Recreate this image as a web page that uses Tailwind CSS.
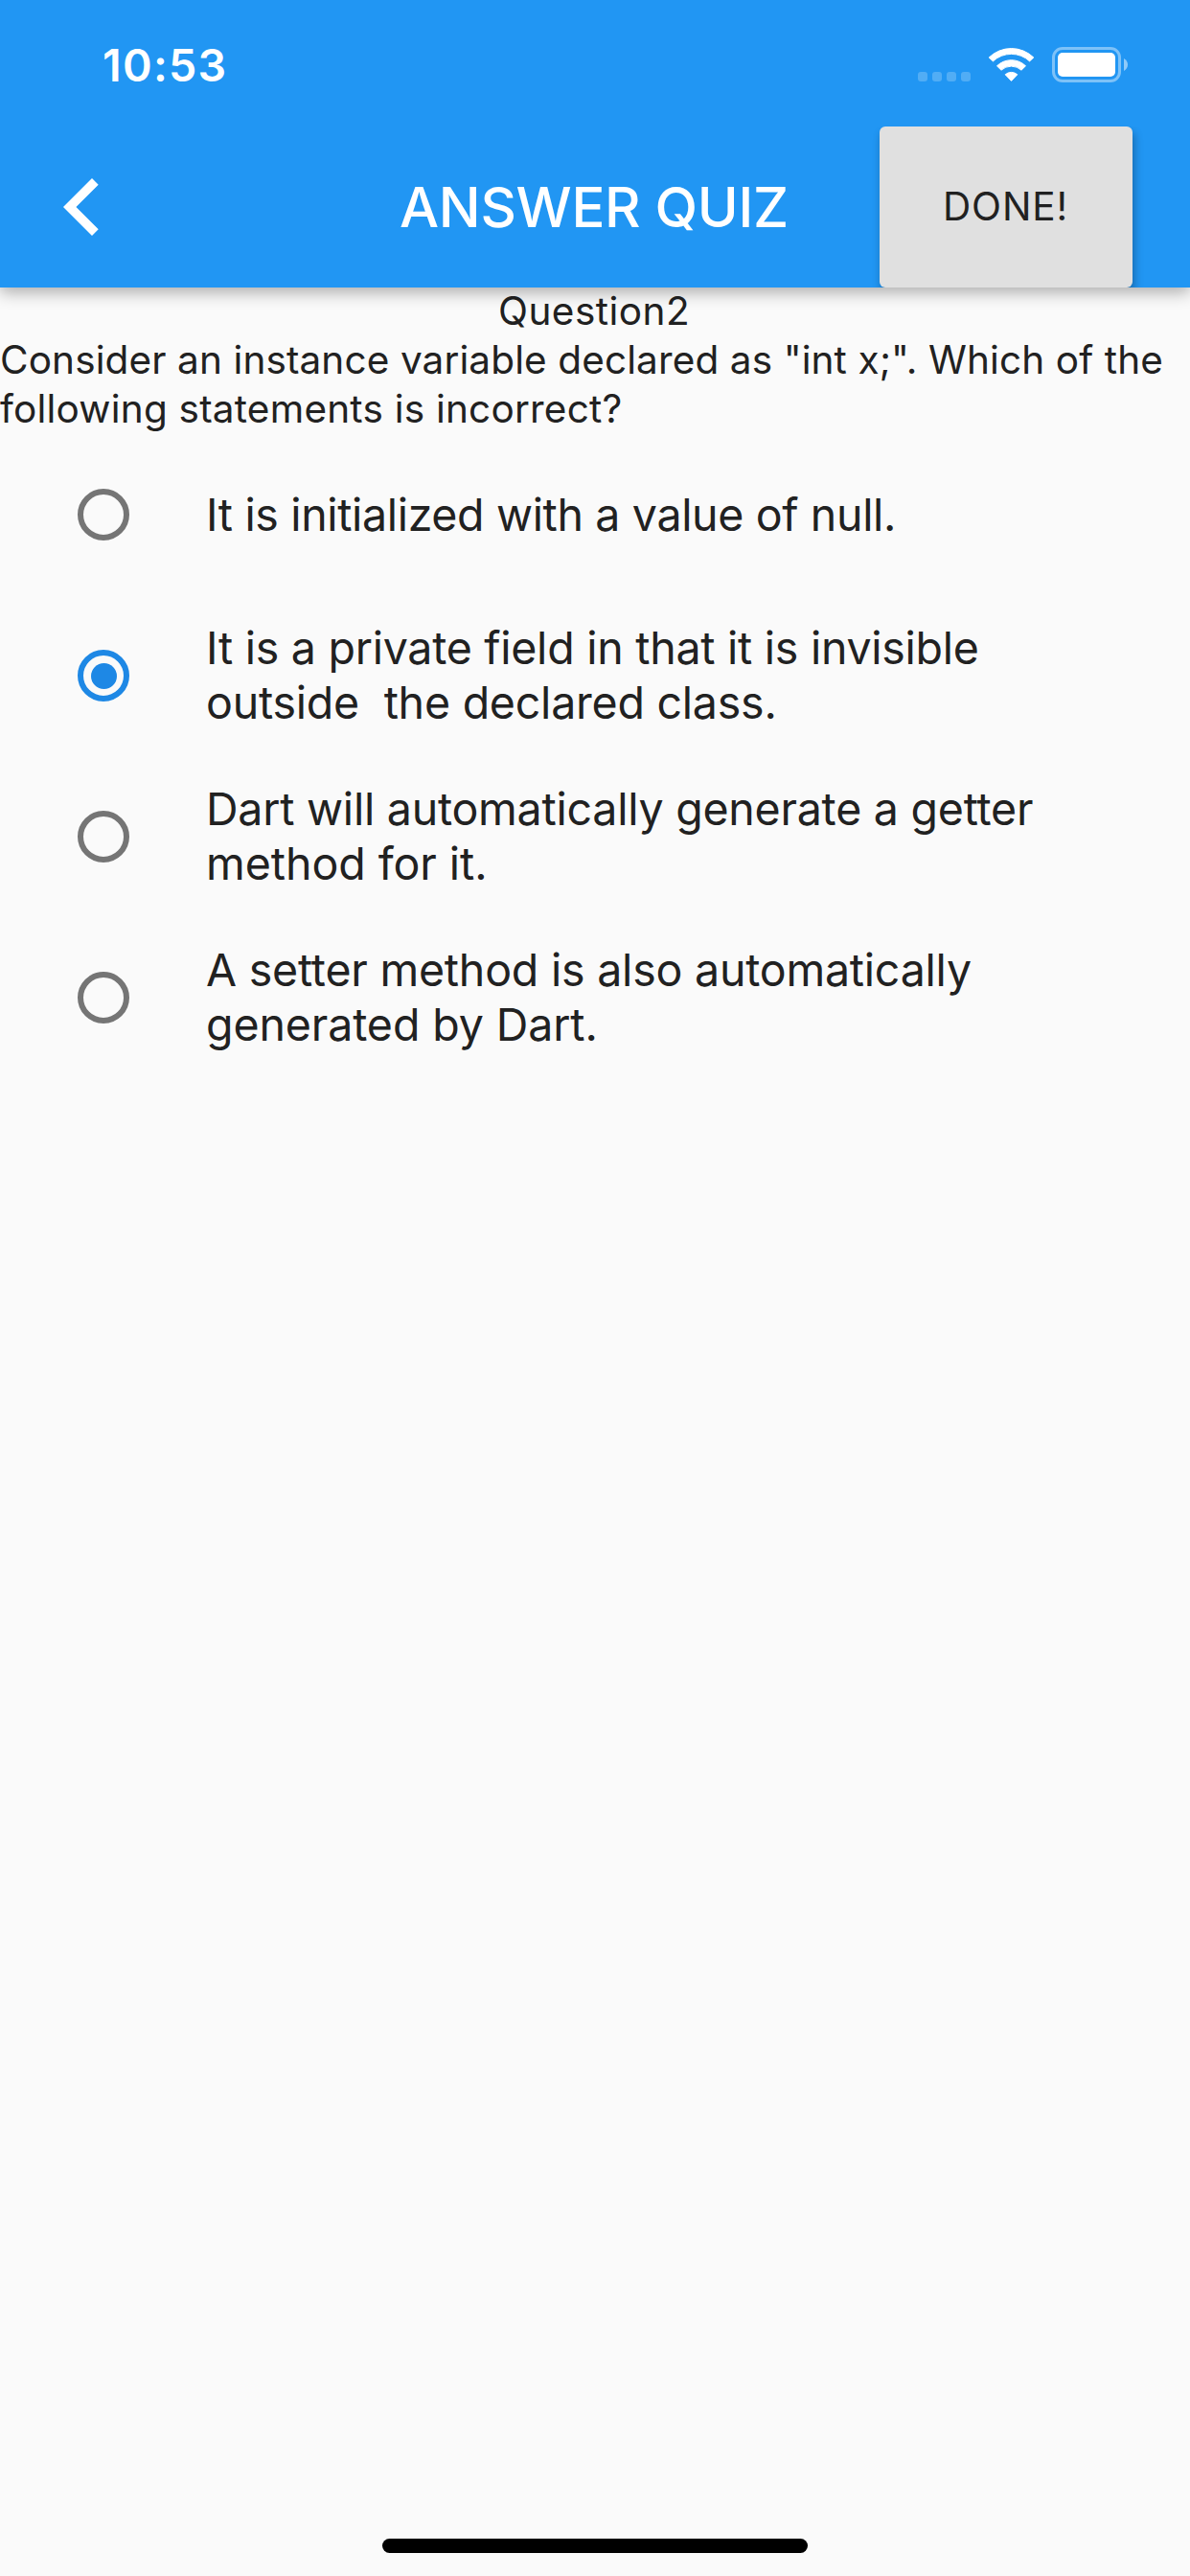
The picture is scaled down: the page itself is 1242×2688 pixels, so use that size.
<!DOCTYPE html>
<html lang="en">
<head>
<meta charset="utf-8">
<title>Answer Quiz</title>
<script src="https://cdn.jsdelivr.net/npm/@tailwindcss/browser@4"></script>
</head>
<body class="bg-[#fafafa]">
<div class="flex h-[2688px] w-[1242px] flex-col overflow-hidden bg-[#fafafa] font-['Inter',sans-serif] text-[#212121]">

  <header class="relative z-10 flex h-[300px] shrink-0 flex-col bg-[#2196f3] text-white shadow-[0_5px_16px_0_rgba(0,0,0,0.32)]">
    <!-- Status bar -->
    <div class="flex h-[132px] items-start justify-between pl-[107px] pr-[65px]">
      <time class="mt-[39px] text-[46.5px] leading-[58px] font-semibold tracking-[1.27px]">10:53</time>
      <svg class="mt-[40px] h-[54px] w-[219px]" viewBox="958 40 219 54" fill="#fff">
        <g fill-opacity=".22">
          <rect x="958" y="75" width="10" height="10" rx="3"/>
          <rect x="973" y="75" width="10" height="10" rx="3"/>
          <rect x="988" y="75" width="10" height="10" rx="3"/>
          <rect x="1003" y="75" width="10" height="10" rx="3"/>
        </g>
        <g stroke="#fff" stroke-width="1" stroke-linejoin="round">
          <path d="M1032.2 60A33.5 33.5 0 0 1 1078.8 60L1074.6 63.9A28 28 0 0 0 1036.4 63.9Z"/>
          <path d="M1040.5 68.8A21.5 21.5 0 0 1 1070.5 68.8L1066 73.2A15.5 15.5 0 0 0 1045 73.2Z"/>
          <path d="M1049.2 77.8A9.5 9.5 0 0 1 1061.8 77.8L1055.5 84.4Z"/>
        </g>
        <rect x="1099.5" y="50.5" width="69" height="34" rx="9.5" fill="none" stroke="#fff" stroke-opacity=".42" stroke-width="3"/>
        <rect x="1104" y="55" width="60" height="25" rx="5"/>
        <path d="M1173 61C1175.5 62.3 1177 64.6 1177 67.5S1175.500 72.700 1173 74Z" fill-opacity=".5"/>
      </svg>
    </div>
    <!-- Toolbar -->
    <div class="grid h-[168px] grid-cols-[417px_501px_264px] overflow-hidden">
      <button class="flex items-center pl-[66px]" aria-label="Back">
        <svg class="h-[60px] w-[37px]" viewBox="0 0 37 60" fill="#fff"><path d="M30 0L0 30L30 60L36.700 53.300L13.400 30L36.700 6.700Z"/></svg>
      </button>
      <h1 class="self-center whitespace-nowrap text-[58px] leading-[70px] font-medium tracking-[-0.296px]">ANSWER QUIZ</h1>
      <button class="flex items-center rounded-[6px] bg-[#e0e0e0] pl-[66px] pb-px text-[40.5px] leading-[50px] font-normal tracking-[0.887px] text-[#212121] shadow-[2px_6px_10px_0_rgba(0,0,0,0.3)]">DONE!</button>
    </div>
  </header>

  <main class="flex grow flex-col">
    <section class="-mt-px flex flex-col text-[40.5px] leading-[51px] whitespace-nowrap">
      <h2 class="pl-[520px] tracking-[0.478px]">Question2</h2>
      <p class="tracking-[0.116px]">Consider an instance variable declared as "int x;". Which of the</p>
      <p class="tracking-[0.22px] leading-[52px]">following statements is incorrect?</p>
    </section>

    <ul class="flex flex-col text-[46.5px] leading-[57px] whitespace-pre">
      <li class="flex h-[168px] items-center pl-[81px]">
        <span class="mr-[80px] size-[54px] shrink-0 rounded-full border-[6px] border-[#757575]"></span>
        <div class="flex flex-col"><span class="tracking-[-0.343px]">It is initialized with a value of null.</span></div>
      </li>
      <li class="flex h-[168px] items-center pl-[81px]">
        <span class="mr-[80px] flex size-[54px] shrink-0 items-center justify-center rounded-full border-[6px] border-[#1e88e5]"><i class="size-[27px] rounded-full bg-[#1e88e5]"></i></span>
        <div class="flex flex-col"><span class="tracking-[-0.259px]">It is a private field in that it is invisible</span><span class="tracking-[-0.227px]">outside  the declared class.</span></div>
      </li>
      <li class="flex h-[168px] items-center pl-[81px]">
        <span class="mr-[80px] size-[54px] shrink-0 rounded-full border-[6px] border-[#757575]"></span>
        <div class="flex flex-col"><span class="tracking-[-0.233px]">Dart will automatically generate a getter</span><span class="tracking-[-0.044px]">method for it.</span></div>
      </li>
      <li class="flex h-[168px] items-center pl-[81px]">
        <span class="mr-[80px] size-[54px] shrink-0 rounded-full border-[6px] border-[#757575]"></span>
        <div class="flex flex-col"><span class="tracking-[-0.212px]">A setter method is also automatically</span><span class="tracking-[-0.102px]">generated by Dart.</span></div>
      </li>
    </ul>
  </main>

  <!-- Home indicator -->
  <footer class="flex justify-center pb-[24px]"><div class="h-[15px] w-[444px] rounded-full bg-black"></div></footer>
</div>
</body>
</html>
